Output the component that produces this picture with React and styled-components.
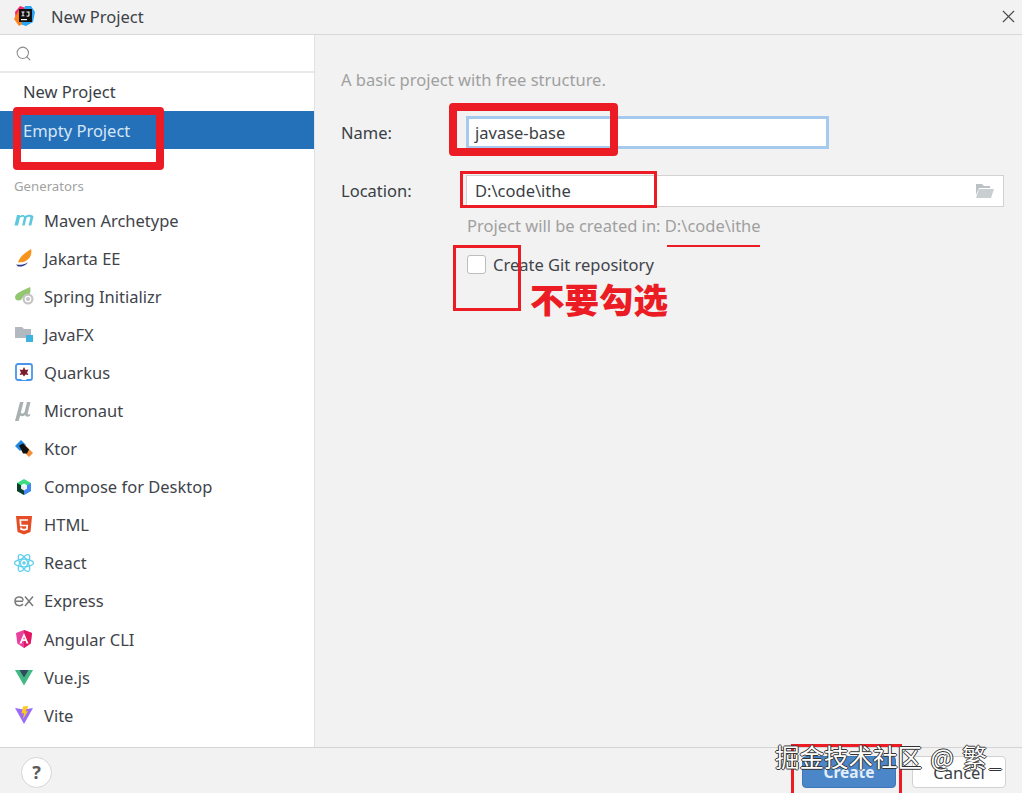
import styled, { createGlobalStyle } from 'styled-components';
import { Search, X } from 'lucide-react';

const GlobalStyle = createGlobalStyle`
  html, body {
    margin: 0;
    padding: 0;
    background: #f2f2f2;
  }
  body {
    font-family: "Noto Sans", "Open Sans", "Noto Sans CJK SC", sans-serif;
    font-size: 16.5px;
    color: #3a3f46;
  }
`;

const Window = styled.div`
  position: relative;
  width: 1022px;
  height: 793px;
  display: flex;
  flex-direction: column;
  overflow: hidden;
  background: #f2f2f2;
`;

const TitleBar = styled.header`
  height: 35px;
  box-sizing: border-box;
  flex: none;
  display: flex;
  align-items: center;
  padding: 0 3px 2px 14px;
  border-bottom: 1px solid #d8d8d8;
`;

const Title = styled.span`
  margin-left: 15px;
  flex: 1;
  color: #3d4248;
`;

const CloseButton = styled.span`
  display: flex;
  color: #4a4a4a;
`;

const Body = styled.div`
  flex: 1;
  min-height: 0;
  display: flex;
`;

const Sidebar = styled.aside`
  width: 315px;
  box-sizing: border-box;
  flex: none;
  display: flex;
  flex-direction: column;
  background: #fff;
  border-right: 1px solid #e2e2e2;
`;

const SearchRow = styled.div`
  height: 38px;
  box-sizing: border-box;
  flex: none;
  display: flex;
  align-items: center;
  padding-left: 15px;
  color: #8c8c8c;
  border-bottom: 2px solid #e8e8e8;
`;

const ProjectRow = styled.div`
  height: 38px;
  box-sizing: border-box;
  display: flex;
  align-items: center;
  padding: 0 0 ${({ $selected }) => ($selected ? 0 : 2)}px 23px;
  color: ${({ $selected }) => ($selected ? '#d7e6f6' : '#3a3f46')};
  background: ${({ $selected }) => ($selected ? '#2470b9' : 'transparent')};
`;

const SectionLabel = styled.div`
  margin: 26px 0 0 14px;
  height: 22px;
  display: flex;
  align-items: center;
  font-size: 13.2px;
  color: #a2a2a2;
`;

const GeneratorList = styled.div`
  margin-top: 4px;
  display: flex;
  flex-direction: column;
`;

const GeneratorRow = styled.div`
  height: 38.1px;
  display: flex;
  align-items: center;
  gap: 10px;
  padding-left: 14px;
  color: #3f444b;
`;

const IconSlot = styled.svg`
  width: 20px;
  height: 20px;
  flex: none;
`;

const LogoMark = styled.svg`
  width: 22px;
  height: 22px;
  flex: none;
`;

const Main = styled.main`
  flex: 1;
  display: flex;
  flex-direction: column;
  padding: 34px 18px 0 26px;
`;

const Description = styled.p`
  margin: 0;
  height: 22px;
  line-height: 22px;
  color: #a0a0a0;
`;

const FormRow = styled.div`
  display: flex;
  align-items: center;
  margin-top: ${({ $top }) => $top}px;
`;

const FieldLabel = styled.label`
  width: 125px;
  flex: none;
  color: #3a3f46;
  padding-bottom: ${({ $lift }) => $lift || 0}px;
`;

const NameField = styled.div`
  width: 363px;
  height: 33px;
  box-sizing: border-box;
  display: flex;
  align-items: center;
  padding-left: 6px;
  background: #fff;
  border: 3px solid #a6c9ee;
  color: #3a3f46;
`;

const LocationField = styled.div`
  width: 538px;
  height: 32px;
  box-sizing: border-box;
  display: flex;
  align-items: center;
  justify-content: space-between;
  padding: 0 8px 1px 8px;
  background: #fff;
  border: 1px solid #d2d2d2;
  color: #3a3f46;
`;

const Hint = styled.div`
  margin: 8px 0 0 126px;
  height: 22px;
  line-height: 22px;
  color: #a0a0a0;
`;

const CheckRow = styled.div`
  margin: 16px 0 0 126px;
  display: flex;
  align-items: center;
  gap: 7px;
  color: #3f444b;
`;

const CheckBox = styled.span`
  width: 19px;
  height: 19px;
  box-sizing: border-box;
  background: #fff;
  border: 1px solid #bdbdbd;
  border-radius: 3px;
`;

const Footer = styled.footer`
  height: 46px;
  flex: none;
  display: flex;
  align-items: center;
  padding: 3px 16px 0 21px;
  box-sizing: border-box;
  border-top: 1px solid #d4d4d4;
`;

const HelpButton = styled.span`
  width: 31px;
  height: 31px;
  box-sizing: border-box;
  display: flex;
  align-items: center;
  justify-content: center;
  background: #fff;
  border: 1px solid #d6d6d6;
  border-radius: 50%;
  font-size: 18px;
  font-weight: 700;
  color: #5c5c5c;
`;

const FooterActions = styled.div`
  margin-left: auto;
  display: flex;
  gap: 16px;
`;

const DialogButton = styled.span`
  width: 94px;
  height: 32px;
  box-sizing: border-box;
  display: flex;
  align-items: center;
  justify-content: center;
  border-radius: 4px;
  font-size: ${({ $primary }) => ($primary ? 15.5 : 16.5)}px;
  font-weight: ${({ $primary }) => ($primary ? 700 : 400)};
  color: ${({ $primary }) => ($primary ? '#e4eefa' : '#3a3f46')};
  background: ${({ $primary }) => ($primary ? '#4a86c8' : '#fff')};
  border: 1px solid ${({ $primary }) => ($primary ? '#3f78b8' : '#d2d2d2')};
`;

const Mark = styled.div`
  position: absolute;
  box-sizing: border-box;
  left: ${({ $x }) => $x}px;
  top: ${({ $y }) => $y}px;
  width: ${({ $w }) => $w}px;
  height: ${({ $h }) => $h}px;
  border: ${({ $heavy }) => ($heavy ? '8px' : '3px')} solid #ec1c24;
  border-radius: ${({ $heavy }) => ($heavy ? 4 : 0)}px;
`;

const Underline = styled.div`
  position: absolute;
  left: 667px;
  top: 245px;
  width: 93px;
  height: 2px;
  background: #ec1c24;
`;

const Warning = styled.div`
  position: absolute;
  left: 530px;
  top: 276px;
  font-family: "Noto Sans CJK SC", sans-serif;
  font-size: 34.5px;
  line-height: 44px;
  font-weight: 900;
  color: #ec1c24;
`;

const Watermark = styled.div`
  position: absolute;
  left: 775px;
  top: 740px;
  white-space: nowrap;
  word-spacing: 3px;
  font-family: "Noto Sans CJK SC", sans-serif;
  font-size: 24.5px;
  line-height: 34px;
  color: #fff;
  text-shadow: -1px 0 #333, 1px 0 #333, 0 -1px #333, 0 1px #333;
`;

const WatermarkTail = styled.span`
  position: relative;
  top: 7px;
  margin-left: 2px;
  font-size: 13px;
`;

const AppLogo = () => (
  <LogoMark viewBox="0 0 22 22">
    <path d="M1 7 6 1l6 2-6 16-4-3z" fill="#f0286e" />
    <path d="M11 1h6l4 6-2 10-7 4-6-2z" fill="#2aa4f4" />
    <path d="M0 14l5-9 3 14-3 2z" fill="#fc801d" />
    <rect x="5" y="4" width="13" height="13" fill="#111" />
    <rect x="7" y="14" width="6" height="1.200" fill="#fff" />
    <path d="M7.500 6.500h3v.9h-1v3h1v.9h-3v-.9h1v-3h-1zM12.500 6.500h3v4c0 1-.7 1.400-3 1.100v-1c1.300.2 1.900 0 1.900-.4V7.400h-1.900z" fill="#fff" />
  </LogoMark>
);

const icons = {
  maven: (
    <path d="M0.500 15.500 3 5h3l-.2 1.200C7.500 4.800 10 4.600 11 6.300 12.800 4.700 18 4 19.500 6.500L17.300 15.500h-2.700L16.500 7.200c-1.200-.9-3-.4-4 .6L10.700 15.500H8.200L10 7.200c-1.200-.9-3-.4-4.200.7L4 15.500z" fill="#5cc8dd" />
  ),
  jakarta: (
    <>
      <path d="M17 1c1.500 5-1 11-8 13l-5 .5C6 8 11 5 17 1z" fill="#f7941d" />
      <path d="M2 16.500c4 .8 8 .3 12-2-3 3.500-7 4.500-10 4z" fill="#2b3a8c" />
    </>
  ),
  spring: (
    <>
      <path d="M1 11c1-5 8-6 15-10 1 3 .5 6-1 8-3 0-6 1-8 5-3 1-6 .5-6-3z" fill="#6db33f" opacity="0.75" />
      <circle cx="14" cy="13" r="5.500" fill="#c4c4c4" />
      <circle cx="14" cy="13" r="2.700" fill="none" stroke="#fff" strokeWidth="1.300" />
    </>
  ),
  javafx: (
    <>
      <path d="M1 3h7l2 2h7v9H1z" fill="#b3b9c0" />
      <rect x="12" y="11" width="7" height="7" fill="#3db3e2" />
    </>
  ),
  quarkus: (
    <>
      <rect x="2" y="2" width="16" height="16" rx="2" fill="#fff" stroke="#4695eb" strokeWidth="1.800" />
      <path d="M10 5l1.500 3 3-.5-1.500 3 1.500 2.500-3-.5-1.500 2-1.500-2-3 .5L7 10.500 5.500 7.500l3 .5z" fill="#7b1f2e" />
      <path d="M7 18l3-2.500 3 2.500z" fill="#fff" />
    </>
  ),
  micronaut: (
    <path d="M1 20 6 1h3.500L7 11c-.4 2 2 2 3.500.2L13 1h3.500l-2.800 11.500c-.2 1 .8 1.200 2.500.6l-.4 2c-2.300 1-4.300.6-4.700-1-1.700 1.300-3.500 1.500-4.800.7L4.500 20z" fill="#a9b0b0" />
  ),
  ktor: (
    <>
      <path d="M1 7 7 1l5 5-6 6z" fill="#1e88e5" />
      <path d="M11 6l8 8-4 4-8-8z" fill="#f28c38" />
      <path d="M6 6l4-2 6 6-2 4-4 0z" fill="#111" transform="translate(-1 .5)" />
    </>
  ),
  compose: (
    <>
      <path d="M10 2l7 4v8l-7 4-7-4V6z" fill="#3ddc84" />
      <path d="M10 10l7-4v8l-7 4z" fill="#4285f4" />
      <path d="M10 10v8l-7-4V6z" fill="#0b3d2e" />
      <path d="M10 6.500l3 1.700v3.600l-3 1.700-3-1.700V8.200z" fill="#fff" opacity="0.9" />
    </>
  ),
  html: (
    <>
      <path d="M2 1h16l-1.500 16L10 19.500 3.500 17z" fill="#e44d26" />
      <path d="M14 5H6.300l.4 5.500h6.500l-.3 3.500-2.900.9-2.900-.9-.1-1.500" fill="none" stroke="#fff" strokeWidth="1.700" />
    </>
  ),
  react: (
    <g fill="none" stroke="#61cfee" strokeWidth="1.300">
      <ellipse cx="10" cy="10" rx="9.500" ry="3.800" />
      <ellipse cx="10" cy="10" rx="9.500" ry="3.800" transform="rotate(60 10 10)" />
      <ellipse cx="10" cy="10" rx="9.500" ry="3.800" transform="rotate(120 10 10)" />
      <circle cx="10" cy="10" r="1.800" fill="#61cfee" stroke="none" />
    </g>
  ),
  express: (
    <path d="M1 10.200h8M9 13c-2 2.600-7.800 2.400-8-2.600C.8 5 8.500 4.500 9.200 9.500M11 5.500l8 9.500M19 5.500 11 15" fill="none" stroke="#7b7b7b" strokeWidth="1.500" />
  ),
  angular: (
    <>
      <path d="M10 1 2 4l1.300 10.500L10 19l6.700-4.500L18 4z" fill="#e8409f" />
      <path d="M10 1v18l6.700-4.500L18 4z" fill="#e3175f" />
      <path d="M10 4 5.500 14.500h2l1-2.500h3l1 2.500h2zM9.200 10.300 10 8l.8 2.300z" fill="#fff" />
    </>
  ),
  vue: (
    <>
      <path d="M1 3h18L10 18.500z" fill="#41b883" />
      <path d="M5.500 3h9L10 10.500z" fill="#35495e" />
    </>
  ),
  vite: (
    <>
      <path d="M1 3l9 1.500L19 3 10 19z" fill="#9a6cf5" />
      <path d="M9 1.500l5.500-.5-3 5.500 2.500-.5-5 8 1-6-2.500.5z" fill="#ffc81f" />
    </>
  ),
};

const generators = [
  ['maven', 'Maven Archetype'],
  ['jakarta', 'Jakarta EE'],
  ['spring', 'Spring Initializr'],
  ['javafx', 'JavaFX'],
  ['quarkus', 'Quarkus'],
  ['micronaut', 'Micronaut'],
  ['ktor', 'Ktor'],
  ['compose', 'Compose for Desktop'],
  ['html', 'HTML'],
  ['react', 'React'],
  ['express', 'Express'],
  ['angular', 'Angular CLI'],
  ['vue', 'Vue.js'],
  ['vite', 'Vite'],
];

export default function App() {
  return (
    <Window>
      <GlobalStyle />
      <TitleBar>
        <AppLogo />
        <Title>New Project</Title>
        <CloseButton>
          <X size={21} strokeWidth={1.3} />
        </CloseButton>
      </TitleBar>
      <Body>
        <Sidebar>
          <SearchRow>
            <Search size={17} strokeWidth={1.5} />
          </SearchRow>
          <ProjectRow>New Project</ProjectRow>
          <ProjectRow $selected>Empty Project</ProjectRow>
          <SectionLabel>Generators</SectionLabel>
          <GeneratorList>
            {generators.map(([icon, label]) => (
              <GeneratorRow key={label}>
                <IconSlot viewBox="0 0 20 20">{icons[icon]}</IconSlot>
                {label}
              </GeneratorRow>
            ))}
          </GeneratorList>
        </Sidebar>
        <Main>
          <Description>A basic project with free structure.</Description>
          <FormRow $top={25}>
            <FieldLabel>Name:</FieldLabel>
            <NameField>javase-base</NameField>
          </FormRow>
          <FormRow $top={26}>
            <FieldLabel $lift={2}>Location:</FieldLabel>
            <LocationField>
              D:\code\ithe
              <svg width="20" height="16" viewBox="0 0 20 16">
                <path d="M1 1h6l2 2h6v2H4L1 12z" fill="#bcc2c4" />
                <path d="M4 6h15l-3 9H1z" fill="#c9ced0" />
              </svg>
            </LocationField>
          </FormRow>
          <Hint>Project will be created in: D:\code\ithe</Hint>
          <CheckRow>
            <CheckBox />
            Create Git repository
          </CheckRow>
        </Main>
      </Body>
      <Footer>
        <HelpButton>?</HelpButton>
        <FooterActions>
          <DialogButton $primary>Create</DialogButton>
          <DialogButton>Cancel</DialogButton>
        </FooterActions>
      </Footer>

      <Mark $heavy $x={13} $y={107} $w={151} $h={63} />
      <Mark $heavy $x={449} $y={103} $w={169} $h={53} />
      <Mark $x={460} $y={171} $w={197} $h={37} />
      <Mark $x={453} $y={245} $w={68} $h={66} />
      <Mark $x={791} $y={744} $w={111} $h={60} />
      <Underline />
      <Warning>不要勾选</Warning>
      <Watermark>
        掘金技术社区 @ 繁<WatermarkTail>一</WatermarkTail>
      </Watermark>
    </Window>
  );
}
